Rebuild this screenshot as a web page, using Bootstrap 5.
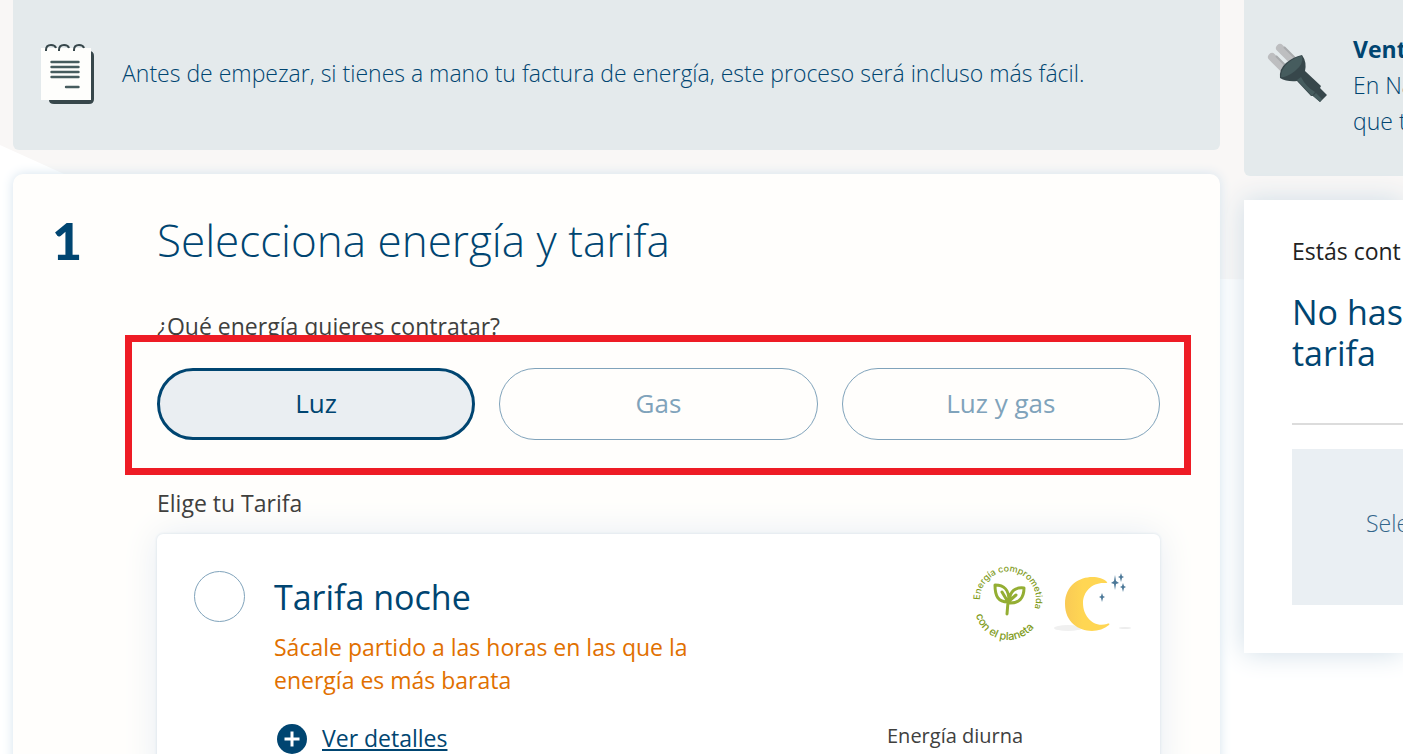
<!DOCTYPE html>
<html lang="es">
<head>
<meta charset="utf-8">
<meta name="viewport" content="width=device-width, initial-scale=1">
<title>Contratar energía</title>
<link rel="stylesheet" href="https://cdn.jsdelivr.net/npm/bootstrap@5.3.0/dist/css/bootstrap.min.css">
<style>
  :root { --navy: #004571; --steel: #80a3bb; --ink: #40403e; }
  body { font-family: "Open Sans", "Noto Sans", sans-serif; font-size: 23px; line-height: 36px; color: var(--ink); background: #fff; }
  .backdrop { inset: 0 0 auto 0; width: 100%; height: 282px; z-index: -1; }
  .page { padding-left: 13px; gap: 24px; z-index: 0; }
  .main-col { flex: 1 1 0; min-width: 0; }
  .side { flex: 0 0 159px; min-width: 0; }
  .notice { background: #e4eaec; color: var(--navy); font-weight: 300; border-radius: 0 0 6px 6px; }
  .notice strong { font-weight: 700; }
  .notice-main { height: 150px; padding: 0 28px; gap: 27px; }
  .notice-main span { padding-bottom: 4px; }
  .notice-side { height: 176px; padding: 31px 0 0 22px; gap: 23px; border-radius: 0 0 0 6px; }
  .step { background: #fffefc; border-radius: 10px 10px 0 0; padding: 38px 60px 0 39px; box-shadow: 0 0 12px #d5e3ee; }
  .step-num { flex: 0 0 105px; font-family: Lato, sans-serif; font-size: 52px; line-height: 56px; font-weight: 900; color: var(--navy); }
  .step h1 { font-size: 44px; line-height: 56px; font-weight: 300; color: var(--navy); margin-bottom: 42px; }
  .question { line-height: 32px; margin-bottom: 26px; }
  .pills { display: grid; grid-template-columns: repeat(3, minmax(0, 1fr)); gap: 24px; }
  .pill { height: 72px; border: 1px solid var(--steel); border-radius: 36px; color: var(--steel); font-size: 26px; padding: 0 0 2px; }
  .pill.chosen, .pill.chosen:hover { border: 3px solid var(--navy); background: #eaeef2; color: var(--navy); }
  .highlight { inset: -33px -31px -35px -32px; border: 7px solid #ee1c25; pointer-events: none; }
  .choose { line-height: 32px; margin: 47px 0 15px; }
  .tariff { border-radius: 6px; padding: 30px 28px 30px 37px; box-shadow: 0 0 3px #d3e0e8, 0 0 36px #e6edf3; }
  .tariff-radio.form-check-input { width: 51px; height: 51px; margin: 7px 29px 0 0; border: 1px solid var(--steel); }
  .tariff h2 { font-size: 34px; line-height: 44px; color: var(--navy); margin: 11px 0 12px; }
  .promo { color: #e17000; line-height: 33px; width: 440px; margin-bottom: 25px; }
  .tariff-foot { padding-left: 83px; }
  .details { color: var(--navy); line-height: 33px; gap: 15px; }
  .price-name { font-size: 20px; line-height: 28px; width: 245px; }
  .badges { overflow: visible; }
  .summary { background: #fff; padding: 33px 0 48px 48px; box-shadow: 0 0 26px #cfdde7; }
  .summary p { color: #222; line-height: 36px; margin-bottom: 23px; }
  .summary h2 { font-size: 34px; line-height: 41px; color: var(--navy); }
  .rule { height: 2px; background: #dcdcdc; margin: 49px 0 24px; }
  .pick { height: 156px; background: #eaeff3; color: #33658a; font-weight: 300; padding: 0 0 8px 74px; }
</style>
</head>
<body>
<div class="page position-relative d-flex vh-100 overflow-hidden">
  <svg class="backdrop position-absolute" viewBox="0 0 1403 282" preserveAspectRatio="none" aria-hidden="true">
    <path fill="#f9f7f6" d="M0 0H1403V282L1220 279Q500 330 64 174L0 145Z"/>
  </svg>
  <main class="main-col d-flex flex-column">
    <div class="notice notice-main flex-shrink-0 d-flex align-items-center mb-4">
      <svg class="flex-shrink-0" width="54" height="62" viewBox="0 0 54 62" aria-hidden="true">
        <path fill="#37474b" d="M8 7H48Q53 7 53 12V55Q53 60 48 60H13Q8 60 8 56Z"/>
        <path fill="#fefefc" d="M0 4H50V56H0Z"/>
        <g fill="none" stroke="#37474b" stroke-width="2"><path d="M5 7V6Q5 1 10 1Q14 1 15 4M18 7V6Q18 1 23 1Q27 1 28 4M33 7V6Q33 1 38 1Q42 1 43 4"/></g>
        <path fill="none" stroke="#465c5e" stroke-width="2.4" stroke-linecap="round" d="M10.500 18H37.500M10.500 23H37.500M10.500 28H37.500M10.500 33H37.500M25 43H37.500"/>
      </svg>
      <span>Antes de empezar, si tienes a mano tu factura de energía, este proceso será incluso más fácil.</span>
    </div>
    <section class="step d-flex flex-grow-1">
      <div class="step-num">1</div>
      <div class="flex-grow-1">
        <h1>Selecciona energía y tarifa</h1>
        <p class="question">¿Qué energía quieres contratar?</p>
        <div class="pills position-relative" role="group" aria-label="Energía">
          <button type="button" class="btn pill chosen">Luz</button>
          <button type="button" class="btn pill">Gas</button>
          <button type="button" class="btn pill">Luz y gas</button>
          <div class="highlight position-absolute"></div>
        </div>
        <p class="choose">Elige tu Tarifa</p>
        <div class="tariff bg-white">
          <div class="d-flex">
            <input class="form-check-input tariff-radio flex-shrink-0" type="radio" name="tarifa" id="noche">
            <div class="flex-grow-1">
              <h2><label for="noche">Tarifa noche</label></h2>
              <p class="promo">Sácale partido a las horas en las que la energía es más barata</p>
            </div>
            <svg class="badges flex-shrink-0" width="160" height="76" viewBox="0 0 160 76" role="img" aria-label="Energía comprometida con el planeta">
              <defs>
                <path id="arcTop" d="M8 36A28 28 0 1 1 60 50"/>
                <path id="arcLow" d="M3 43A33 33 0 0 0 69 43"/>
                <linearGradient id="moon"><stop offset="0" stop-color="#f9ca55"/><stop offset=".4" stop-color="#ffd653"/></linearGradient>
              </defs>
              <g fill="#7f9c1c" font-family="Inter, sans-serif" font-weight="500">
                <text font-size="9"><textPath href="#arcTop">Energía comprometida</textPath></text>
                <text font-size="11"><textPath href="#arcLow" startOffset="8">con el planeta</textPath></text>
              </g>
              <g fill="none" stroke="#94ae33" stroke-width="3" stroke-linecap="round" stroke-linejoin="round">
                <path d="M35 50L36 38C26 38 23 32 23 21C32 21 37 25 37 37C38 27 43 23 52 24C52 34 47 40 36 39M30 28L36 38L44 31"/>
              </g>
              <ellipse cx="96" cy="64" rx="14" ry="3" fill="#f0f0f0"/><ellipse cx="153" cy="64" rx="6" ry="1" fill="#ededed"/>
              <path fill="url(#moon)" d="M135 18C125 8 93 12 93 40C93 67 123 73 137 61C138 60 137 59 135 60C121 64 111 52 111 39C111 27 121 18 133 19Q136 19 135 18Z"/>
              <path fill="#4c7898" d="M143 11L144 17L147 19L144 20L143 26L142 20L139 19L142 17ZM149 9L150 12L152 13L150 14L149 18L148 14L146 13L148 12ZM151 19L152 22L154 23L152 24L151 28L150 24L148 23L150 22ZM130 29L131 32L133 33L131 34L130 38L129 34L127 33L129 32Z"/>
            </svg>
          </div>
          <div class="tariff-foot d-flex justify-content-between">
            <a href="#" class="details d-flex align-items-center">
              <svg width="30" height="30" viewBox="0 0 30 30" aria-hidden="true"><circle cx="15" cy="15" r="15" fill="#004571"/><path d="M15 7.500V22.500M7.500 15H22.500" stroke="#fff" stroke-width="3"/></svg>
              <span>Ver detalles</span>
            </a>
            <div class="price-name">Energía diurna</div>
          </div>
        </div>
      </div>
    </section>
  </main>
  <aside class="side">
    <div class="notice notice-side d-flex mb-4 overflow-hidden text-nowrap">
      <svg class="flex-shrink-0" width="64" height="76" viewBox="0 0 64 76" aria-hidden="true">
        <path stroke="#bdbec0" stroke-width="8" stroke-linecap="round" d="M14 17L29 32M6 26L20 40"/>
        <path stroke="#a9abad" stroke-width="2" d="M18 16L30 28M10 25L21 36"/>
        <path fill="#37474b" d="M36 24Q41 31 39 40L55 55L54 57L61 64L54 71L47 65L45 65L31 50Q21 51 14 47Q13 38 20 32T36 24Z"/>
        <path fill="#465c5e" d="M36 25Q38 33 29 40T15 46Q15 38 22 32T36 25ZM31 49L35 46Q40 56 49 61L46 65ZM50 62L56 68L54 71L47 65Z"/>
      </svg>
      <div><strong class="d-block">Vent</strong>En Na<br>que t</div>
    </div>
    <div class="summary text-nowrap">
      <p>Estás cont</p>
      <h2 class="m-0">No has<br>tarifa</h2>
      <div class="rule"></div>
      <div class="pick d-flex align-items-center">Sele</div>
    </div>
  </aside>
</div>
<script src="https://cdn.jsdelivr.net/npm/bootstrap@5.3.0/dist/js/bootstrap.bundle.min.js"></script>
</body>
</html>
